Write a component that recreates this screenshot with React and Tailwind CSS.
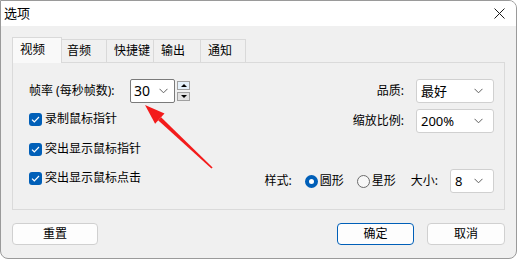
import React from 'react';

const Chevron = () => (
  <svg width="9" height="6" viewBox="0 0 9 6" className="shrink-0">
    <path d="M0.5 0.8 L4.5 4.8 L8.5 0.8" fill="none" stroke="#5f5f5f" strokeWidth="1" />
  </svg>
);

const Select = ({ value, className }) => (
  <div className={`flex h-[24px] items-center justify-between rounded-[3px] border border-[#d0d0d0] bg-white pl-[4px] pr-[10px] text-[13px] text-black ${className}`}>
    <span>{value}</span>
    <Chevron />
  </div>
);

const Checkbox = ({ label }) => (
  <div className="flex h-[16px] items-center gap-[3px]">
    <div className="flex h-[13px] w-[13px] items-center justify-center rounded-[3px] bg-[#005fb8]">
      <svg width="9" height="7" viewBox="0 0 9 7">
        <path d="M1 3.6 L3.3 5.8 L8 1" fill="none" stroke="white" strokeWidth="1.2" />
      </svg>
    </div>
    <span>{label}</span>
  </div>
);

const Radio = ({ checked, label }) => (
  <div className="flex items-center gap-[2px]">
    {checked ? (
      <div className="h-[13px] w-[13px] rounded-full border-[4px] border-[#005fb8] bg-white" />
    ) : (
      <div className="h-[13px] w-[13px] rounded-full border border-[#6b6b6b] bg-[#f7f7f7]" />
    )}
    <span>{label}</span>
  </div>
);

const tabs = [
  { name: '视频', w: 'w-[50px]', pl: 'pl-[7px]', active: true },
  { name: '音频', w: 'w-[46px]', pl: 'pl-[5px]' },
  { name: '快捷键', w: 'w-[48px]', pl: 'pl-[7px]' },
  { name: '输出', w: 'w-[48px]', pl: 'pl-[7px]' },
  { name: '通知', w: 'w-[46px]', pl: 'pl-[7px]' },
];

export default function App() {
  return (
    <div
      className="relative flex h-[259px] w-[517px] flex-col overflow-hidden rounded-tr-[8px] rounded-br-[8px] rounded-bl-[8px] border border-[#9a9a9a] bg-[#f0f0f0] text-[12px] leading-none text-black"
      style={{ fontFamily: '"Noto Sans", "Noto Sans CJK SC", sans-serif' }}
    >
      {/* title bar */}
      <div className="flex h-[25px] shrink-0 items-center justify-between bg-white pl-[3px] pr-[11px]">
        <span className="text-[13px]">选项</span>
        <svg width="11" height="11" viewBox="0 0 11 11">
          <path d="M0.5 0.5 L10.5 10.5 M10.5 0.5 L0.5 10.5" stroke="#1a1a1a" strokeWidth="1" />
        </svg>
      </div>

      <div className="flex flex-1 flex-col px-[11px] pt-[11px]">
        {/* tabs */}
        <div className="flex h-[25px] items-end">
          {tabs.map((t) =>
            t.active ? (
              <div
                key={t.name}
                className={`relative z-10 -mb-px flex h-[26px] items-center border border-b-0 border-[#d9d9d9] bg-[#f9f9f9] text-[12.5px] ${t.w} ${t.pl}`}
              >
                {t.name}
              </div>
            ) : (
              <div
                key={t.name}
                className={`-ml-px flex h-[23px] items-center border border-b-0 border-[#d9d9d9] bg-[#f0f0f0] text-[12px] ${t.w} ${t.pl}`}
              >
                {t.name}
              </div>
            )
          )}
        </div>

        {/* panel */}
        <div className="flex h-[148px] w-[493px] justify-between border border-[#dadada] bg-[#f0f0f0] pl-[16px] pr-[10px] pt-[16px]">
          <div className="flex flex-col">
            <div className="flex h-[24px] items-center">
              <span className="w-[101px]">帧率 (每秒帧数):</span>
              <div className="flex h-[24px] w-[45px] items-center justify-between rounded-[2px] border border-[#7a7a7a] bg-white pl-[3px] pr-[6px] text-[14px]">
                <span>30</span>
                <Chevron />
              </div>
              <div className="ml-[2px] flex flex-col gap-[2px]">
                <div className="flex h-[9px] w-[13px] items-center justify-center border border-[#a0a0a0] bg-[#e5f1fb]">
                  <svg width="6" height="3" viewBox="0 0 6 3"><path d="M0 3 L3 0 L6 3Z" fill="#000" /></svg>
                </div>
                <div className="flex h-[9px] w-[13px] items-center justify-center border border-[#a0a0a0] bg-[#e1e1e1]">
                  <svg width="6" height="3" viewBox="0 0 6 3"><path d="M0 0 L6 0 L3 3Z" fill="#000" /></svg>
                </div>
              </div>
            </div>
            <div className="mt-[8px]"><Checkbox label="录制鼠标指针" /></div>
            <div className="mt-[14px]"><Checkbox label="突出显示鼠标指针" /></div>
            <div className="mt-[13px]"><Checkbox label="突出显示鼠标点击" /></div>
          </div>

          <div className="flex flex-col items-end">
            <div className="flex items-center gap-[12px]">
              <span>品质:</span>
              <Select value="最好" className="w-[78px]" />
            </div>
            <div className="mt-[6px] flex items-center gap-[12px]">
              <span>缩放比例:</span>
              <Select value="200%" className="w-[78px]" />
            </div>
            <div className="mt-[36px] flex items-center">
              <span className="mr-[13px]">样式:</span>
              <Radio checked label="圆形" />
              <div className="ml-[13px]"><Radio label="星形" /></div>
              <span className="ml-[15px] mr-[12px]">大小:</span>
              <Select value="8" className="w-[44px]" />
            </div>
          </div>
        </div>

        {/* buttons */}
        <div className="mt-[13px] flex items-center">
          <button className="flex h-[22px] w-[86px] items-center justify-center rounded-[4px] border border-[#d0d0d0] bg-[#fdfdfd]">重置</button>
          <button className="ml-auto flex h-[22px] w-[77px] items-center justify-center rounded-[4px] border border-[#005fb8] bg-[#fdfdfd]">确定</button>
          <button className="ml-[13px] flex h-[22px] w-[78px] items-center justify-center rounded-[4px] border border-[#d0d0d0] bg-[#fdfdfd]">取消</button>
        </div>
      </div>

      {/* annotation arrow */}
      <svg className="pointer-events-none absolute left-[-1px] top-[-1px]" width="517" height="259" viewBox="0 0 517 259">
        <polygon points="211.4,168.6 212.6,167.4 161.1,117.3 158.1,120.2" fill="#f31b1b" />
        <polygon points="145,105 164.5,113.6 155.1,123.8" fill="#f31b1b" />
      </svg>
    </div>
  );
}
